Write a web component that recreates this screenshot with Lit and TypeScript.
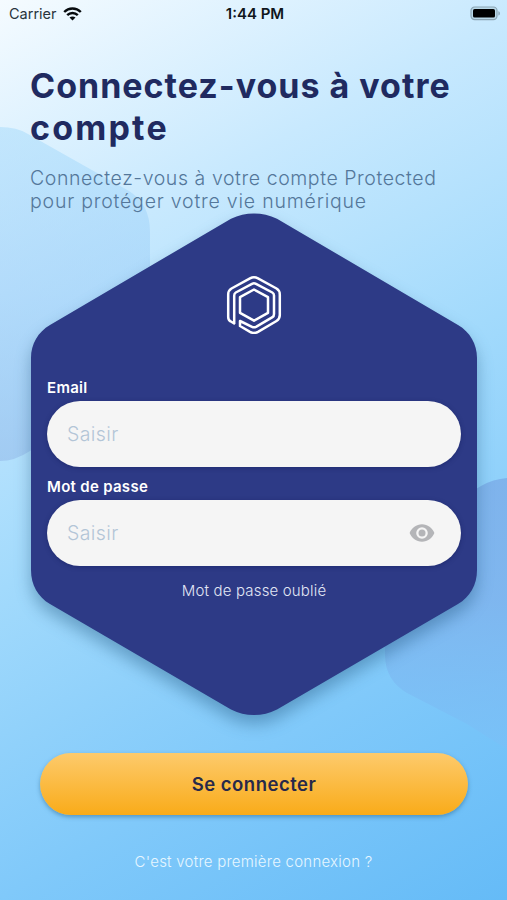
import { LitElement, html, css } from "lit";
import { customElement, property } from "lit/decorators.js";

@customElement("status-bar")
class StatusBar extends LitElement {
  static styles = css`
    :host { display: grid; flex: none; grid-template-columns: 1fr auto 1fr; align-items: center; height: 27px; padding: 0 6px 0 9px; color: #10161b; font: 400 14.5px/27px Inter, sans-serif; }
    .left { display: flex; align-items: center; gap: 6px; }
    .carrier { color: #28343c; }
    .time { font-weight: 600; font-size: 15px; }
    .battery { justify-self: end; }
    svg { display: block; }
  `;
  render() {
    return html`
      <div class="left"><span class="carrier">Carrier</span>
        <svg width="19" height="14" viewBox="0 0 19 14" fill="none" stroke="#070b0e" stroke-width="2.4">
          <path d="M1.2 5C5.8.4 13.2.4 17.8 5M4.2 8.1c3-2.9 7.6-2.9 10.6 0"/>
          <path d="M9.5 13.6 6.5 10.6c1.7-1.6 4.3-1.6 6 0z" fill="#070b0e" stroke="none"/>
        </svg>
      </div>
      <span class="time">1:44 PM</span>
      <svg class="battery" width="31" height="15" viewBox="0 0 31 15">
        <rect x="1" y="1" width="26" height="12.6" rx="3.6" fill="#b9d8e8" stroke="#8ba5b4" stroke-width="1.2"/>
        <rect x="3" y="3" width="22" height="8.6" rx="1.6" fill="#000"/>
        <path d="M28.4 5.2c2 .6 2 3.8 0 4.4z" fill="#8ba5b4"/>
      </svg>`;
  }
}

@customElement("pill-field")
class PillField extends LitElement {
  @property() label = "";
  @property() type = "text";
  static styles = css`
    :host { display: block; font-family: Inter, sans-serif; }
    .label { display: block; height: 27px; font: 600 15px/27px Inter, sans-serif; letter-spacing: .3px; color: #fff; }
    .box { box-sizing: border-box; display: flex; align-items: center; justify-content: space-between; height: 66px; padding: 0 26px 0 20px; border-radius: 33px; background: #f5f5f5; box-shadow: 0 1px 4px #141d5c80; }
    .hint { font-size: 19.5px; font-weight: 300; letter-spacing: .4px; color: #b3c5d7; }
  `;
  render() {
    return html`<span class="label">${this.label}</span>
      <div class="box"><span class="hint">Saisir</span>
        ${this.type === "password" ? html`<svg width="26" height="18" viewBox="0 0 26 18">
          <path fill="#b4b5b8" fill-rule="evenodd" d="M13 .3C7.3.3 2.7 3.8.6 9c2.1 5.2 6.7 8.7 12.4 8.7S23.3 14.2 25.4 9C23.3 3.8 18.7.3 13 .3zM13 3.2a5.8 5.8 0 1 1 0 11.6a5.8 5.8 0 0 1 0-11.6z"/>
          <circle cx="13" cy="9" r="3.5" fill="#b4b5b8"/></svg>` : ""}
      </div>`;
  }
}

@customElement("app-root")
class AppRoot extends LitElement {
  static styles = css`
    :host { display: block; position: relative; height: 900px; overflow: hidden; font-family: Inter, sans-serif; background: linear-gradient(151deg, #f5fbff 0%, #c8e9fe 25%, #a2dafc 50%, #80c9fa 76%, #65bbf7 100%); }
    .shapes { position: absolute; inset: 0; }
    .page { position: relative; display: flex; flex-direction: column; height: 900px; }
    header { box-sizing: border-box; flex: none; height: 186px; padding: 38px 30px 0; }
    h1 { margin: 0; font-size: 34px; line-height: 42px; font-weight: 700; letter-spacing: 1px; color: #202a60; }
    .wide { letter-spacing: 2.2px; }
    .sub { margin: 18px 0 0; font-size: 19.5px; line-height: 23px; font-weight: 300; letter-spacing: .57px; color: #54779a; white-space: nowrap; }
    .second { letter-spacing: .79px; }
    .card { position: relative; flex: none; height: 502px; width: 446px; margin-left: 31px; }
    .hex { position: absolute; left: -31px; top: -33px; filter: drop-shadow(0 9px 8px #1b4f7966); }
    .inner { position: relative; display: flex; flex-direction: column; padding: 61px 16px 0; }
    .logo { display: block; align-self: center; margin-bottom: 40px; }
    pill-field + pill-field { margin-top: 6px; }
    .forgot { align-self: center; margin-top: 15px; font-size: 15px; line-height: 20px; font-weight: 300; letter-spacing: .17px; color: #e1e6f5; }
    button { display: block; width: 428px; height: 62px; flex: none; margin: 38px 0 0 40px; border: 0; padding: 0; border-radius: 31px; background: linear-gradient(#fdca6c, #f9ab19); box-shadow: 0 2px 4px #29648a80; font: 600 18.5px/62px Inter, sans-serif; letter-spacing: .5px; color: #27294a; }
    .first { align-self: center; margin-top: 37px; font-size: 15px; line-height: 20px; font-weight: 300; letter-spacing: .24px; color: #e6f6ff; }
  `;
  render() {
    return html`
      <svg class="shapes" width="507" height="900" viewBox="0 0 507 900">
        <defs>
          <linearGradient id="a" x1="0" y1="0" x2="0" y2="1"><stop offset="0" stop-color="#a4dafb" stop-opacity=".5"/><stop offset=".5" stop-color="#9ccdf8" stop-opacity=".5"/><stop offset="1" stop-color="#98bfec" stop-opacity=".65"/></linearGradient>
          <linearGradient id="b" x1="0" y1="0" x2="0" y2="1"><stop offset="0" stop-color="#7caee9" stop-opacity=".85"/><stop offset=".45" stop-color="#7eb3ed" stop-opacity=".85"/><stop offset="1" stop-color="#7ac0f7" stop-opacity=".6"/></linearGradient>
        </defs>
        <path fill="url(#a)" d="M0 127Q17 127 28 134L129 191Q150 204 150 232V352Q150 374 130 386L30 451Q15 461 0 461z"/>
        <path fill="url(#b)" d="M507 478Q493 479 481 486L403 532Q385 543 385 565V655Q385 680 407 693L467 724Q492 740 507 749z"/>
      </svg>
      <div class="page">
        <status-bar></status-bar>
        <header>
          <h1>Connectez-vous à votre <span class="wide">compte</span></h1>
          <p class="sub">Connectez-vous à votre compte Protected<br><span class="second">pour protéger votre vie numérique</span></p>
        </header>
        <section class="card">
          <svg class="hex" width="507" height="580" viewBox="0 180 507 580">
            <path fill="#2d3a86" d="M231 218.700Q242 213.500 254 213.500Q266 213.500 277 218.700L458 325C470 332 477 344 477 358V570C477 585 470 597 458 604L277 709.500Q266 715 254 715Q242 715 231 709.500L50 604C38 597 31 585 31 570V358C31 344 38 332 50 325z"/>
          </svg>
          <div class="inner">
            <svg class="logo" width="56" height="60" viewBox="0 0 56 60" fill="none" stroke="#fff" stroke-width="2.5" stroke-linejoin="round">
              <path d="M9 50L4.500 47.300Q2.200 46 2.200 43V20.500Q2.200 16.500 5.500 14.500L24 4.300Q28 2.200 32 4.300L50.500 14.500Q53.800 16.500 53.800 20.500V41Q53.800 45 50.500 47L32 57.800Q28 60 24 57.800L14 52V47L26 52.800Q28 53.800 30 52.800L46.500 43.200Q48 42.300 48 40V21.500Q48 19.500 46.300 18.500L30 9.800Q28 8.800 26 9.800L9.800 18.500Q8.200 19.500 8.200 21.500V50"/>
              <path d="M28 15.500L42 23.200V38.800L28 46.700L14 38.800V23.200z"/>
            </svg>
            <pill-field label="Email"></pill-field>
            <pill-field label="Mot de passe" type="password"></pill-field>
            <span class="forgot">Mot de passe oublié</span>
          </div>
        </section>
        <button>Se connecter</button>
        <span class="first">C'est votre première connexion ?</span>
      </div>`;
  }
}
